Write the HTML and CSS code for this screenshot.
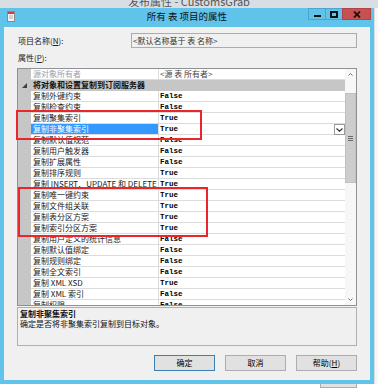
FILE: index.html
```html
<!DOCTYPE html>
<html lang="zh-CN">

<head>
    <meta charset="UTF-8">
    <meta name="viewport" content="width=device-width, initial-scale=1.0">
    <link rel="stylesheet" href="styles.css">
    <title>所有 表 项目的属性</title>
</head>

<body>
    <div class="screen">
        <div class="parent-bar">发布属性 - CustomsGrab</div>

        <div class="middle">
            <div class="dialog">
                <div class="titlebar">
                    <div class="tb-left">
                        <svg class="app-icon" width="8" height="11" viewBox="0 0 8 11">
                            <rect x="0.5" y="0.5" width="7" height="10" fill="#f2f2f2" stroke="#8a8a8a" />
                            <rect x="1" y="1" width="6" height="2" fill="#d23c3c" />
                            <line x1="2" y1="5" x2="6" y2="5" stroke="#b0b0b0" />
                            <line x1="2" y1="7" x2="6" y2="7" stroke="#b0b0b0" />
                        </svg>
                    </div>
                    <div class="title">所有 表 项目的属性</div>
                    <div class="tb-right">
                        <div class="cap">
                            <svg width="7" height="7" viewBox="0 0 7 7"><rect x="0" y="4" width="7" height="2" fill="#111" /></svg>
                        </div>
                        <div class="cap">
                            <svg width="8" height="7" viewBox="0 0 8 7"><rect x="1" y="1" width="6" height="5" fill="none" stroke="#111" stroke-width="2" /></svg>
                        </div>
                        <div class="cap close">
                            <svg width="8" height="7" viewBox="0 0 8 7"><path d="M1 0.5 L7 6.5 M7 0.5 L1 6.5" stroke="#2a1010" stroke-width="1.8" /></svg>
                        </div>
                    </div>
                </div>

                <div class="client">
                    <div class="name-row">
                        <div class="field-label">项目名称(<u>N</u>):</div>
                        <div class="textbox">&lt;默认名称基于 表 名称&gt;</div>
                    </div>
                    <div class="props-label">属性(<u>P</u>):</div>

                    <div class="grid">
                        <div class="rows">
                            <div class="row">
                                <div class="m"></div>
                                <div class="n readonly">源对象所有者</div>
                                <div class="v plain">&lt;源 表 所有者&gt;</div>
                            </div>
                            <div class="row cat">
                                <div class="m">
                                    <svg width="5" height="5" viewBox="0 0 5 5"><polygon points="5,0 5,5 0,5" fill="#404040" /></svg>
                                </div>
                                <div class="cat-label">将对象和设置复制到订阅服务器</div>
                            </div>
                            <div class="row"><div class="m"></div><div class="n">复制外键约束</div><div class="v">False</div></div>
                            <div class="row"><div class="m"></div><div class="n">复制检查约束</div><div class="v">False</div></div>
                            <div class="row"><div class="m"></div><div class="n">复制聚集索引</div><div class="v">True</div></div>
                            <div class="row sel">
                                <div class="m"></div>
                                <div class="n">复制非聚集索引</div>
                                <div class="v">True
                                    <div class="dd">
                                        <svg width="7" height="4" viewBox="0 0 7 4"><path d="M0.5 0.5 L3.5 3.2 L6.5 0.5" fill="none" stroke="#333" stroke-width="1.2" /></svg>
                                    </div>
                                </div>
                            </div>
                            <div class="row"><div class="m"></div><div class="n">复制默认值规范</div><div class="v">False</div></div>
                            <div class="row"><div class="m"></div><div class="n">复制用户触发器</div><div class="v">False</div></div>
                            <div class="row"><div class="m"></div><div class="n">复制扩展属性</div><div class="v">False</div></div>
                            <div class="row"><div class="m"></div><div class="n">复制排序规则</div><div class="v">True</div></div>
                            <div class="row"><div class="m"></div><div class="n">复制 INSERT、UPDATE 和 DELETE 存</div><div class="v">True</div></div>
                            <div class="row"><div class="m"></div><div class="n">复制唯一键约束</div><div class="v">True</div></div>
                            <div class="row"><div class="m"></div><div class="n">复制文件组关联</div><div class="v">True</div></div>
                            <div class="row"><div class="m"></div><div class="n">复制表分区方案</div><div class="v">True</div></div>
                            <div class="row"><div class="m"></div><div class="n">复制索引分区方案</div><div class="v">True</div></div>
                            <div class="row"><div class="m"></div><div class="n">复制用户定义的统计信息</div><div class="v">False</div></div>
                            <div class="row"><div class="m"></div><div class="n">复制默认值绑定</div><div class="v">False</div></div>
                            <div class="row"><div class="m"></div><div class="n">复制规则绑定</div><div class="v">False</div></div>
                            <div class="row"><div class="m"></div><div class="n">复制全文索引</div><div class="v">False</div></div>
                            <div class="row"><div class="m"></div><div class="n">复制 XML XSD</div><div class="v">True</div></div>
                            <div class="row"><div class="m"></div><div class="n">复制 XML 索引</div><div class="v">False</div></div>
                            <div class="row"><div class="m"></div><div class="n">复制权限</div><div class="v">False</div></div>
                        </div>

                        <div class="vscroll">
                            <div class="sb-btn">
                                <svg width="5" height="3" viewBox="0 0 5 3"><path d="M0.5 2.5 L2.5 0.5 L4.5 2.5" fill="none" stroke="#707070" /></svg>
                            </div>
                            <div class="thumb">
                                <svg width="5" height="5" viewBox="0 0 5 5"><path d="M0 0.5 H5 M0 2.5 H5 M0 4.5 H5" stroke="#6a6a6a" /></svg>
                            </div>
                            <div class="sb-fill"></div>
                            <div class="sb-btn">
                                <svg width="5" height="3" viewBox="0 0 5 3"><path d="M0.5 0.5 L2.5 2.5 L4.5 0.5" fill="none" stroke="#707070" /></svg>
                            </div>
                        </div>
                    </div>

                    <div class="desc">
                        <div class="desc-title">复制非聚集索引</div>
                        <div>确定是否将非聚集索引复制到目标对象。</div>
                    </div>

                    <div class="buttons">
                        <div class="btn default">确定</div>
                        <div class="btn">取消</div>
                        <div class="btn">帮助(<u>H</u>)</div>
                    </div>
                </div>
            </div>
            <div class="parent-edge"></div>
        </div>

        <div class="parent-bottom">
            <div class="ghost-btn"></div>
        </div>

        <!-- annotation boxes drawn over the grid -->
        <div class="mark mark-one"></div>
        <div class="mark mark-two"></div>
    </div>
</body>

</html>
```

FILE: styles.css
```css
* {
    box-sizing: border-box;
}

body {
    margin: 0;
    width: 378px;
    height: 388px;
    overflow: hidden;
    background: #fff;
    font-family: "Noto Sans CJK SC", "Liberation Sans", sans-serif;
    font-size: 8px;
    color: #000;
}

.screen {
    position: relative;
    width: 378px;
    height: 388px;
    overflow: hidden;
}

.parent-bar {
    height: 8px;
    background: #d8dee4;
    color: #555;
    font-size: 11px;
    line-height: 2px;
    text-align: center;
    overflow: hidden;
    white-space: nowrap;
}

.middle {
    display: flex;
    height: 376px;
}

.dialog {
    width: 374px;
    flex: none;
    background: #5fc3ea;
    display: flex;
    flex-direction: column;
}

.titlebar {
    height: 19px;
    display: grid;
    grid-template-columns: 1fr auto 1fr;
}

.tb-left {
    padding: 3px 0 0 7px;
}

.app-icon {
    display: block;
}

.title {
    font-size: 9.5px;
    line-height: 16px;
    color: #111;
}

.tb-right {
    display: flex;
    justify-content: flex-end;
    align-items: flex-start;
    padding-right: 3px;
}

.cap {
    width: 18px;
    height: 12px;
    display: flex;
    align-items: center;
    justify-content: center;
    border: 1px solid #4aa6cb;
    margin-left: -1px;
}

.cap.close {
    width: 29px;
    background: #c75050;
    border-color: #b14444;
}

.client {
    flex: 1;
    margin: 0 4px 4px;
    background: #f0f0f0;
    padding: 6px 13px 0;
    display: flex;
    flex-direction: column;
}

.name-row {
    display: flex;
    align-items: center;
    height: 15px;
}

.field-label {
    width: 114px;
    flex: none;
    padding-left: 1px;
    color: #222;
}

.textbox {
    flex: 1;
    height: 15px;
    border: 1px solid #acacac;
    background: #f0f0f0;
    padding: 0 1px;
    line-height: 13px;
    color: #333;
}

.props-label {
    height: 20px;
    line-height: 20px;
    padding-left: 1px;
    color: #222;
}

.grid {
    height: 238px;
    flex: none;
    border: 1px solid #8e9196;
    background: #fff;
    display: flex;
}

.rows {
    flex: 1;
    overflow: hidden;
}

.row {
    display: flex;
    height: 11px;
    line-height: 10px;
}

.m {
    width: 13px;
    flex: none;
    background: #c6c6c6;
    display: flex;
    align-items: center;
    justify-content: center;
}

.n {
    width: 128px;
    flex: none;
    padding-left: 2px;
    border-right: 1px solid #dcdcdc;
    border-bottom: 1px solid #dcdcdc;
    overflow: hidden;
    white-space: nowrap;
    color: #1a1a1a;
}

.n.readonly {
    color: #a0a0a0;
}

.v {
    flex: 1;
    position: relative;
    padding-left: 1px;
    border-bottom: 1px solid #dcdcdc;
    font-family: "Liberation Mono", monospace;
    font-weight: bold;
    font-size: 7.5px;
    white-space: nowrap;
}

.v.plain {
    font-family: "Noto Sans CJK SC", sans-serif;
    font-weight: normal;
    font-size: 8px;
    color: #444;
}

.row.cat {
    background: #c6c6c6;
}

.cat-label {
    flex: 1;
    padding-left: 2px;
    font-weight: bold;
    color: #111;
}

.row.sel .n {
    background: #3399ff;
    color: #fff;
}

.dd {
    position: absolute;
    right: 0;
    top: 0;
    width: 11px;
    height: 11px;
    background: #fff;
    border: 1px solid #9a9a9a;
    display: flex;
    align-items: center;
    justify-content: center;
}

.vscroll {
    width: 11px;
    flex: none;
    background: #f7f7f7;
    display: flex;
    flex-direction: column;
}

.sb-btn {
    height: 11px;
    flex: none;
    display: flex;
    align-items: center;
    justify-content: center;
}

.thumb {
    margin-top: 13px;
    height: 90px;
    flex: none;
    background: #cdcdcd;
    border: 1px solid #c0c0c0;
    display: flex;
    align-items: center;
    justify-content: center;
}

.sb-fill {
    flex: 1;
}

.desc {
    margin-top: 1px;
    height: 39px;
    flex: none;
    border: 1px solid #b0b0b0;
    padding: 1px 2px;
    line-height: 10px;
    color: #111;
}

.desc-title {
    font-weight: bold;
}

.buttons {
    display: flex;
    justify-content: flex-end;
    gap: 10px;
    margin-top: 9px;
}

.btn {
    width: 61px;
    height: 16px;
    border: 1px solid #adadad;
    background: #e1e1e1;
    text-align: center;
    line-height: 14px;
}

.btn.default {
    border-color: #3c7fb1;
}

.parent-edge {
    flex: 1;
    background: #f6f6f6;
    border-left: 1px solid #dedede;
}

.parent-bottom {
    height: 4px;
    background: #fff;
    padding-left: 320px;
}

.ghost-btn {
    width: 37px;
    height: 4px;
    background: #e1e1e1;
    border: 1px solid #adadad;
    border-top: none;
}

.mark {
    position: absolute;
    border: 2px solid #e8262b;
}

.mark-one {
    left: 16px;
    top: 110px;
    width: 186px;
    height: 30px;
}

.mark-two {
    left: 18px;
    top: 187px;
    width: 190px;
    height: 50px;
}
```
